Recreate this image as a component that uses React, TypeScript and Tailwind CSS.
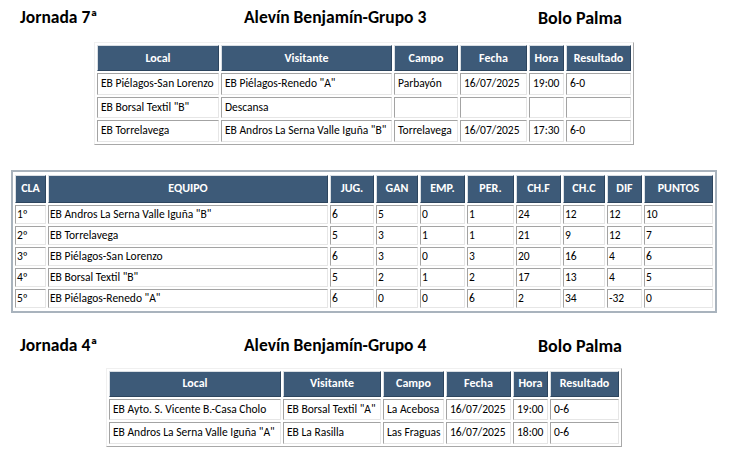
import React from "react";

const font = { fontFamily: "Carlito, Lato, 'Liberation Sans', sans-serif" };

type Row = string[];

const cellBase =
  "border border-t-[#a3a3a3] border-l-[#a3a3a3] border-b-[#e6e6e6] border-r-[#e6e6e6] bg-white text-black whitespace-nowrap overflow-hidden leading-[15px]";
const headBase =
  "border border-t-[#d9dee3] border-l-[#d9dee3] border-b-[#2d455e] border-r-[#2d455e] bg-[#3d5a78] text-white font-bold text-center whitespace-nowrap overflow-hidden leading-[15px]";

function Title({ jornada, grupo }: { jornada: string; grupo: string }) {
  return (
    <div className="flex items-center pl-[20px] text-[17.5px] font-bold text-black leading-none">
      <span className="w-[224px]">{jornada}</span>
      <span className="w-[294px]">{grupo}</span>
      <span className="text-[18px]">Bolo Palma</span>
    </div>
  );
}

function MatchTable({
  widths,
  rows,
  className,
}: {
  widths: number[];
  rows: Row[];
  className: string;
}) {
  const heads = ["Local", "Visitante", "Campo", "Fecha", "Hora", "Resultado"];
  return (
    <table
      className={`${className} table-fixed border-separate border-spacing-[2px] border border-t-[#f0f0f0] border-l-[#f0f0f0] border-b-[#a8a8a8] border-r-[#a8a8a8] text-[11.5px]`}
    >
      <colgroup>
        {widths.map((w, i) => (
          <col key={i} style={{ width: w }} />
        ))}
      </colgroup>
      <thead>
        <tr>
          {heads.map((h) => (
            <th key={h} className={`${headBase} h-[26px] px-[2px] text-[12px]`}>
              {h}
            </th>
          ))}
        </tr>
      </thead>
      <tbody>
        {rows.map((r, i) => (
          <tr key={i}>
            {r.map((c, j) => (
              <td key={j} className={`${cellBase} h-[21.5px] px-[3px] text-left`}>
                {c}
              </td>
            ))}
          </tr>
        ))}
      </tbody>
    </table>
  );
}

const standings: Row[] = [
  ["1º", 'EB Andros La Serna Valle Iguña "B"', "6", "5", "0", "1", "24", "12", "12", "10"],
  ["2º", "EB Torrelavega", "5", "3", "1", "1", "21", "9", "12", "7"],
  ["3º", "EB Piélagos-San Lorenzo", "6", "3", "0", "3", "20", "16", "4", "6"],
  ["4º", 'EB Borsal Textil "B"', "5", "2", "1", "2", "17", "13", "4", "5"],
  ["5º", 'EB Piélagos-Renedo "A"', "6", "0", "0", "6", "2", "34", "-32", "0"],
];

export default function App() {
  const sHeads = ["CLA", "EQUIPO", "JUG.", "GAN", "EMP.", "PER.", "CH.F", "CH.C", "DIF", "PUNTOS"];
  const sWidths = [31, 280, 44, 42, 45, 47, 45, 42, 35, 69];
  return (
    <div className="w-[739px] h-[456px] bg-white overflow-hidden" style={font}>
      <div className="pt-[9px]">
        <Title jornada="Jornada 7ª" grupo="Alevín Benjamín-Grupo 3" />
      </div>
      <div className="mt-[15px]">
        <MatchTable
          className="ml-[94px] w-[539px]"
          widths={[122, 171, 64, 67, 35, 65]}
          rows={[
            ["EB Piélagos-San Lorenzo", 'EB Piélagos-Renedo "A"', "Parbayón", "16/07/2025", "19:00", "6-0"],
            ['EB Borsal Textil "B"', "Descansa", "", "", "", ""],
            ["EB Torrelavega", 'EB Andros La Serna Valle Iguña "B"', "Torrelavega", "16/07/2025", "17:30", "6-0"],
          ]}
        />
      </div>

      <div className="mt-[25px] ml-[11px] w-[706px] border-2 border-[#a9b3bd] pt-[1px] pb-[1px]">
        <table className="w-[702px] table-fixed border-separate border-spacing-[2px] text-[11.5px]">
          <colgroup>
            {sWidths.map((w, i) => (
              <col key={i} style={{ width: w }} />
            ))}
          </colgroup>
          <thead>
            <tr>
              {sHeads.map((h) => (
                <th key={h} className={`${headBase} h-[28px] px-[1px] text-[12px]`}>
                  {h}
                </th>
              ))}
            </tr>
          </thead>
          <tbody>
            {standings.map((r, i) => (
              <tr key={i}>
                {r.map((c, j) => (
                  <td
                    key={j}
                    className={`${cellBase} h-[19px] px-[1px] text-left border-t-[#9a9a9a] border-l-[#9a9a9a]`}
                  >
                    {c}
                  </td>
                ))}
              </tr>
            ))}
          </tbody>
        </table>
      </div>

      <div className="mt-[24px]">
        <Title jornada="Jornada 4ª" grupo="Alevín Benjamín-Grupo 4" />
      </div>
      <div className="mt-[13px]">
        <MatchTable
          className="ml-[106px] w-[515px]"
          widths={[172, 98, 61, 65, 35, 69]}
          rows={[
            ["EB Ayto. S. Vicente B.-Casa Cholo", 'EB Borsal Textil "A"', "La Acebosa", "16/07/2025", "19:00", "0-6"],
            ['EB Andros La Serna Valle Iguña "A"', "EB La Rasilla", "Las Fraguas", "16/07/2025", "18:00", "0-6"],
          ]}
        />
      </div>
    </div>
  );
}
